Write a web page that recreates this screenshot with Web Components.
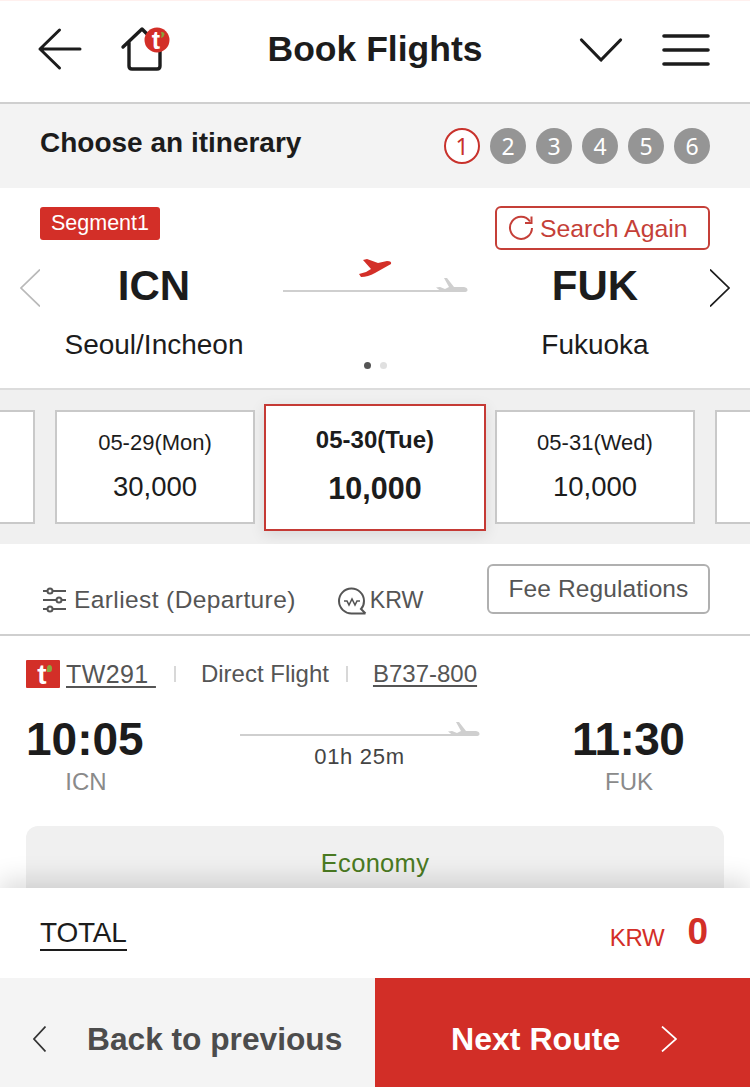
<!DOCTYPE html>
<html lang="en">
<head>
<meta charset="utf-8">
<title>Book Flights</title>
<style>
  html, body { margin: 0; padding: 0; background: #fff; }
  body { width: 750px; height: 1087px; overflow: hidden; font-family: "Liberation Sans", Arial, sans-serif; color: #1c1c1c; }
</style>
</head>
<body>
<booking-page>
  <app-header title="Book Flights"></app-header>
  <step-bar label="Choose an itinerary" current="1" total="6"></step-bar>
  <route-panel></route-panel>
  <date-strip>
    <date-card></date-card>
    <date-card date="05-29(Mon)" price="30,000"></date-card>
    <date-card date="05-30(Tue)" price="10,000" selected></date-card>
    <date-card date="05-31(Wed)" price="10,000"></date-card>
    <date-card></date-card>
  </date-strip>
  <filter-bar></filter-bar>
  <flight-row></flight-row>
  <total-bar></total-bar>
  <footer-nav></footer-nav>
</booking-page>

<script>
const PLANE = 'M0 9.5 L4 9 L9 11 L13 9 L8 0 L11 0 L18 9 H28 Q31.5 9.5 31.5 12 Q31.5 14 28 14 H6 Z';

class ShadowElement extends HTMLElement {
  connectedCallback() {
    if (!this.shadowRoot) {
      this.attachShadow({ mode: 'open' });
      this.shadowRoot.innerHTML = this.template;
    }
  }
}

class BookingPage extends ShadowElement {
  get template() {
    return `
      <style>
        :host { display: flex; flex-direction: column; width: 750px; height: 1087px; overflow: hidden; }
      </style>
      <slot></slot>
    `;
  }
}

class AppHeader extends ShadowElement {
  get template() {
    return `
      <style>
        :host {
          display: grid;
          grid-template-columns: 1fr auto 1fr;
          align-items: center;
          width: 750px;
          height: 104px;
          box-sizing: border-box;
          padding: 0 40px;
          background: #fff;
          border-top: 1px solid #fff0ee;
          border-bottom: 2px solid #cfcfcf;
        }
        .left, .right { display: flex; align-items: center; }
        .left { gap: 40px; margin-left: -1px; }
        .right { justify-content: flex-end; gap: 40px; }
        h1 { margin: 0; font-size: 35.5px; font-weight: bold; color: #1c1c1c; position: relative; top: -2px; }
        svg { display: block; overflow: visible; }
        text { font-family: "Liberation Sans", sans-serif; font-weight: bold; }
      </style>
      <div class="left">
        <svg width="42" height="42" viewBox="0 0 42 42" style="margin-top:-5px">
          <path d="M20.5 2 L1 21 L20.5 40 M1 21 H41" fill="none" stroke="#1c1c1c" stroke-width="3" stroke-linecap="round" stroke-linejoin="round"/>
        </svg>
        <svg width="48" height="44" viewBox="0 0 48 44" style="margin-top:-6px">
          <path d="M2 20 L21 2 L39 20 M8 15 V39 Q8 42 11 42 H36 Q39 42 39 39 V20" fill="none" stroke="#1c1c1c" stroke-width="3.4" stroke-linecap="round" stroke-linejoin="round"/>
          <circle cx="36" cy="13" r="12.5" fill="#d32f28"/>
          <text x="35" y="22" font-size="25" text-anchor="middle" fill="#fff">t</text>
          <path d="M40 5 q3.5 -.5 3.5 2.5 q-.5 2.5 -3.5 3.5 q1.5 -2.5 0 -6 z" fill="#86a33c"/>
        </svg>
      </div>
      <h1>${this.getAttribute('title')}</h1>
      <div class="right">
        <svg width="42" height="24" viewBox="0 0 42 24" style="margin-top:-4px">
          <path d="M1.5 2 L21 22 L40.5 2" fill="none" stroke="#1c1c1c" stroke-width="3.2" stroke-linecap="round" stroke-linejoin="round"/>
        </svg>
        <svg width="48" height="32" viewBox="0 0 48 32" style="margin-top:-4px">
          <path d="M2 2 H46 M2 16 H46 M2 30 H46" stroke="#1c1c1c" stroke-width="3.6" stroke-linecap="round"/>
        </svg>
      </div>
    `;
  }
}

class StepBar extends ShadowElement {
  get template() {
    const current = parseInt(this.getAttribute('current'), 10);
    const total = parseInt(this.getAttribute('total'), 10);
    let steps = '';
    for (let i = 1; i <= total; i++) {
      steps += `<span class="${i === current ? 'on' : ''}">${i}</span>`;
    }
    return `
      <style>
        :host {
          display: flex;
          align-items: center;
          justify-content: space-between;
          height: 84px;
          padding: 0 40px;
          background: #f3f3f3;
        }
        b { font-size: 28px; font-weight: bold; position: relative; top: -3px; }
        div { display: flex; gap: 10px; }
        span {
          width: 36px;
          height: 36px;
          box-sizing: border-box;
          border-radius: 50%;
          background: #959595;
          color: #fff;
          font: 23px/36px "Noto Sans", sans-serif;
          text-align: center;
        }
        span.on { background: #fff; border: 2px solid #c8322c; color: #c8322c; line-height: 32px; }
      </style>
      <b>${this.getAttribute('label')}</b>
      <div>${steps}</div>
    `;
  }
}

class RoutePanel extends ShadowElement {
  get template() {
    return `
      <style>
        :host {
          display: block;
          height: 202px;
          box-sizing: border-box;
          background: #fff;
          border-bottom: 2px solid #dcdcdc;
          padding-top: 18px;
        }
        .top { display: flex; justify-content: space-between; align-items: flex-start; height: 44px; padding: 0 40px; }
        .badge {
          background: #d32f28;
          color: #fff;
          font-size: 21.5px;
          line-height: 33px;
          width: 120px;
          text-align: center;
          border-radius: 3px;
          margin-top: 1px;
        }
        .again {
          display: flex;
          align-items: center;
          gap: 6px;
          width: 215px;
          height: 44px;
          box-sizing: border-box;
          border: 2px solid #c53f38;
          border-radius: 6px;
          padding-left: 11px;
          color: #c53f38;
          font: 24.8px "Liberation Sans", sans-serif;
        }
        .again span { position: relative; top: 1px; }
        .main {
          display: grid;
          grid-template-columns: 20px 228px 1fr 228px 20px;
          padding: 0 20px;
          align-items: start;
        }
        .port { text-align: center; }
        .port.dest { position: relative; left: -1px; }
        .code { font-size: 42px; font-weight: bold; line-height: 48px; margin-top: 12px; }
        .city { font-size: 28px; line-height: 32px; margin-top: 19px; }
        .arrow { margin-top: 19px; display: block; }
        .track { height: 80px; }
        .track svg { display: block; overflow: visible; }
        .dots { display: flex; justify-content: center; gap: 9px; margin-top: 1px; }
        .dots i { width: 7px; height: 7px; border-radius: 50%; background: #e0e0e0; }
        .dots i:first-child { background: #555; }
      </style>
      <div class="top">
        <span class="badge">Segment1</span>
        <div class="again">
          <svg width="26" height="26" viewBox="0 0 26 26">
            <path d="M22 6.5 A11 11 0 1 0 24 13" fill="none" stroke="#c53f38" stroke-width="2"/>
            <path d="M23.5 1.5 V8 H17" fill="none" stroke="#c53f38" stroke-width="2"/>
          </svg>
          <span>Search Again</span>
        </div>
      </div>
      <div class="main">
        <svg class="arrow" width="20" height="38" viewBox="0 0 20 38"><path d="M20 .5 L1 19 L20 37.5" fill="none" stroke="#b9b9b9" stroke-width="1.7"/></svg>
        <div class="port"><div class="code">ICN</div><div class="city">Seoul/Incheon</div></div>
        <div class="track">
          <svg width="214" height="80" viewBox="0 0 214 80">
            <path d="M15 41 H180" stroke="#cfcfcf" stroke-width="2"/>
            <path d="M95 10 L99 9 L110 13 L119 11 Q124 11 123 14 L107 23 Q100 27 93 27 L91 24 L98 22 L103 19 Z" fill="#d32f28"/>
            <path transform="translate(168 28)" d="${PLANE}" fill="#cfcfcf"/>
          </svg>
        </div>
        <div class="port dest"><div class="code">FUK</div><div class="city">Fukuoka</div></div>
        <svg class="arrow" width="20" height="38" viewBox="0 0 20 38"><path d="M0 .5 L19 19 L0 37.5" fill="none" stroke="#1c1c1c" stroke-width="1.7"/></svg>
      </div>
      <div class="dots"><i></i><i></i></div>
    `;
  }
}

class DateStrip extends ShadowElement {
  get template() {
    return `
      <style>
        :host {
          display: flex;
          justify-content: center;
          align-items: center;
          gap: 20px;
          height: 154px;
          background: #f0f0f0;
          overflow: hidden;
        }
      </style>
      <slot></slot>
    `;
  }
}

class DateCard extends ShadowElement {
  get template() {
    const date = this.getAttribute('date') || '';
    const price = this.getAttribute('price') || '';
    return `
      <style>
        :host {
          flex: none;
          display: flex;
          flex-direction: column;
          align-items: center;
          width: 200px;
          height: 114px;
          box-sizing: border-box;
          background: #fff;
          border: 2px solid #c9c9c9;
          color: #1c1c1c;
        }
        :host([selected]) {
          width: 222px;
          height: 127px;
          margin: 0 -11px;
          border-color: #c53a35;
          box-shadow: 0 4px 14px rgba(0, 0, 0, .1);
          font-weight: bold;
          position: relative;
          z-index: 1;
        }
        .date { font-size: 22px; line-height: 24px; margin-top: 19px; }
        .price { font-size: 27.5px; line-height: 32px; margin-top: 16px; }
        :host([selected]) .date { font-size: 24px; margin-top: 22px; }
        :host([selected]) .price { font-size: 30.5px; margin-top: 20px; }
      </style>
      <span class="date">${date}</span>
      <span class="price">${price}</span>
    `;
  }
}

class FilterBar extends ShadowElement {
  get template() {
    return `
      <style>
        :host {
          display: flex;
          align-items: flex-start;
          height: 92px;
          box-sizing: border-box;
          padding: 20px 40px 0 43px;
          background: #fff;
          border-bottom: 2px solid #cfcfcf;
          color: #555;
          font-size: 24.5px;
        }
        .item { display: flex; align-items: center; gap: 8px; margin-top: 21px; height: 30px; letter-spacing: .4px; }
        .item.krw { margin-left: 42px; gap: 4px; font-size: 23.2px; letter-spacing: 0; }
        .fee {
          margin-left: auto;
          width: 223px;
          height: 50px;
          box-sizing: border-box;
          border: 2px solid #b0b0b0;
          border-radius: 6px;
          text-align: center;
          line-height: 46px;
          letter-spacing: .1px;
        }
        svg { display: block; overflow: visible; }
      </style>
      <div class="item">
        <svg width="23" height="24" viewBox="0 0 23 24">
          <g stroke="#555" stroke-width="2" fill="#fff">
            <path d="M0 3 H23 M0 12 H23 M0 21 H23"/>
            <circle cx="7" cy="3" r="2.5"/>
            <circle cx="16" cy="12" r="2.5"/>
            <circle cx="7" cy="21" r="2.5"/>
          </g>
        </svg>
        <span>Earliest (Departure)</span>
      </div>
      <div class="item krw">
        <svg width="28" height="28" viewBox="0 0 28 28">
          <path d="M27.5 27.5 H14 A12.5 12.5 0 1 1 26 15 Q26 20 23 23 L27.5 27.5" fill="none" stroke="#555" stroke-width="2"/>
          <path d="M6 15 H9 L11 19 L14 13 L17 19 L19 15 H22" fill="none" stroke="#555" stroke-width="1.6"/>
        </svg>
        <span>KRW</span>
      </div>
      <div class="fee">Fee Regulations</div>
    `;
  }
}

class FlightRow extends ShadowElement {
  get template() {
    return `
      <style>
        :host {
          display: block;
          height: 252px;
          overflow: hidden;
          background: #fff;
        }
        .info {
          display: flex;
          align-items: center;
          height: 28px;
          padding: 24px 0 0 26px;
          color: #555;
          font-size: 24px;
        }
        .logo {
          width: 34px;
          height: 28px;
          background: #d32f28;
          border-radius: 1px;
          margin-right: 6px;
          color: #fff;
          font-weight: bold;
          font-size: 28px;
          line-height: 29px;
          text-align: center;
          position: relative;
          text-indent: -2px;
        }
        .logo i {
          position: absolute;
          top: 5px;
          right: 8px;
          width: 5px;
          height: 7px;
          background: #8aa83f;
          border-radius: 70% 70% 70% 0;
        }
        u { text-underline-offset: 3px; text-decoration-thickness: 2px; }
        u.no { font-size: 25px; letter-spacing: .4px; }
        .sep { width: 2px; height: 16px; background: #d8d8d8; }
        .times {
          display: grid;
          grid-template-columns: 120px 1fr 112px;
          padding: 0 65px 0 26px;
          margin-top: 26px;
        }
        .time { font-size: 46px; font-weight: bold; line-height: 50px; white-space: nowrap; letter-spacing: 0; }
        .times > div:last-child .time { letter-spacing: -.6px; margin-left: -1px; }
        .port { font-size: 24px; line-height: 28px; color: #8a8a8a; text-align: center; margin-top: 4px; }
        .mid { display: flex; flex-direction: column; align-items: center; padding-top: 5px; }
        .mid svg { display: block; overflow: visible; }
        .dur { font-size: 22px; line-height: 26px; color: #444; letter-spacing: .7px; margin-top: 1px; }
        .fare {
          margin: 30px 26px 0;
          height: 90px;
          border-radius: 12px 12px 0 0;
          background: #f0f0f0;
          text-align: center;
          color: #4a7a22;
          font-size: 25.5px;
          line-height: 74px;
          letter-spacing: .3px;
        }
      </style>
      <div class="info">
        <span class="logo">t<i></i></span>
        <u class="no">TW291&nbsp;</u>
        <span class="sep" style="margin:0 25px 0 18px"></span>
        <span>Direct Flight</span>
        <span class="sep" style="margin:0 25px 0 17px"></span>
        <u>B737-800</u>
      </div>
      <div class="times">
        <div><div class="time">10:05</div><div class="port">ICN</div></div>
        <div class="mid">
          <svg width="240" height="24" viewBox="0 0 240 24">
            <path d="M0 16 H215" stroke="#cfcfcf" stroke-width="2"/>
            <path transform="translate(208 3)" d="${PLANE}" fill="#cfcfcf"/>
          </svg>
          <span class="dur">01h 25m</span>
        </div>
        <div><div class="time">11:30</div><div class="port">FUK</div></div>
      </div>
      <div class="fare">Economy</div>
    `;
  }
}

class TotalBar extends ShadowElement {
  get template() {
    return `
      <style>
        :host {
          display: flex;
          align-items: center;
          justify-content: space-between;
          height: 90px;
          padding: 0 42px 0 40px;
          background: #fff;
          box-shadow: 0 -8px 24px rgba(0, 0, 0, .14);
          position: relative;
        }
        .label { font-size: 28px; line-height: 33px; border-bottom: 2px solid #1c1c1c; letter-spacing: -.2px; }
        .sum { display: flex; align-items: center; gap: 23px; color: #d32f28; }
        .cur { font-size: 24px; position: relative; top: 5px; letter-spacing: -.3px; }
        .val { font-size: 37px; font-weight: bold; position: relative; top: -1px; }
      </style>
      <span class="label">TOTAL</span>
      <span class="sum"><span class="cur">KRW</span><span class="val">0</span></span>
    `;
  }
}

class FooterNav extends ShadowElement {
  get template() {
    return `
      <style>
        :host {
          display: grid;
          grid-template-columns: 1fr 1fr;
          height: 109px;
          font-size: 31.7px;
          font-weight: bold;
          position: relative;
        }
        div { display: flex; align-items: center; padding-top: 13px; box-sizing: border-box; }
        .back { background: #f4f4f4; color: #4c4c4c; padding-left: 33px; gap: 41px; }
        .next { background: #d22e27; color: #fff; padding-left: 76px; gap: 41px; }
        span { position: relative; top: 0; }
        .next span { font-size: 32.1px; }
        svg { display: block; }
      </style>
      <div class="back">
        <svg width="13" height="26" viewBox="0 0 13 26"><path d="M12.5 .5 L1 13 L12.5 25.5" fill="none" stroke="#333" stroke-width="1.7"/></svg>
        <span>Back to previous</span>
      </div>
      <div class="next">
        <span>Next Route</span>
        <svg width="16" height="26" viewBox="0 0 16 26"><path d="M1 .5 L15 13 L1 25.5" fill="none" stroke="#fff" stroke-width="1.7"/></svg>
      </div>
    `;
  }
}

customElements.define('booking-page', BookingPage);
customElements.define('app-header', AppHeader);
customElements.define('step-bar', StepBar);
customElements.define('route-panel', RoutePanel);
customElements.define('date-strip', DateStrip);
customElements.define('date-card', DateCard);
customElements.define('filter-bar', FilterBar);
customElements.define('flight-row', FlightRow);
customElements.define('total-bar', TotalBar);
customElements.define('footer-nav', FooterNav);
</script>
</body>
</html>
